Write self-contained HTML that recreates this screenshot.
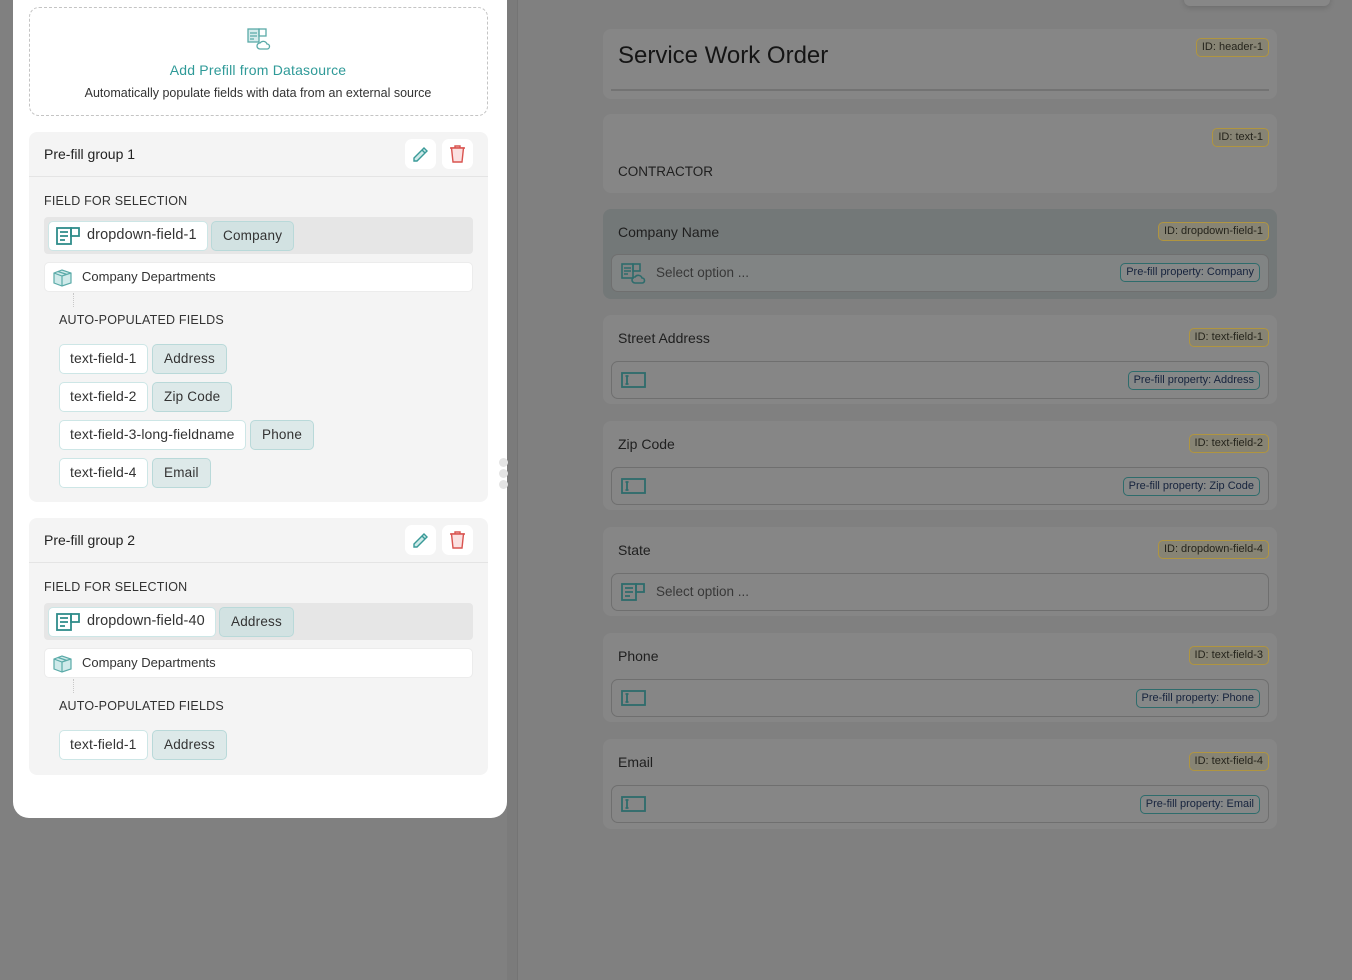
<!DOCTYPE html>
<html><head><meta charset="utf-8">
<style>
*{box-sizing:border-box;margin:0;padding:0}
body{width:1352px;height:980px;overflow:hidden;background:#808080;font-family:"Liberation Sans",sans-serif;position:relative;color:#222}
.a{position:absolute}
.strip{left:507px;top:0;width:11px;height:980px;background:#7b7b7b;border-right:1px solid #747474}
.topbox{left:1184px;top:-10px;width:146px;height:16px;background:#878787;border-radius:6px;box-shadow:0 2px 6px rgba(0,0,0,.15)}
.card{left:603px;width:674px;background:#868686;border-radius:8px}
.lbl{left:15px;font-size:14px;color:#1f1f1f}
.idb{right:8px;height:19px;border:1.5px solid #b09540;background:#878474;border-radius:5px;font-size:11px;color:#25241c;padding:0 5px;line-height:16px}
.inp{left:8px;width:658px;height:38px;border:1.5px solid #6f6f6f;border-radius:7px;background:#868686}
.pp{right:8px;top:9px;height:19px;border:1.5px solid #2e6c6c;background:#868888;border-radius:5px;font-size:11px;color:#16233d;padding:0 5px;line-height:16px}
.ph{left:44px;top:10px;font-size:13.5px;color:#383838}
.panel{left:13px;top:-20px;width:494px;height:838px;background:#fff;border-radius:16px}
.dash{left:29px;top:7px;width:459px;height:109px;border:1.5px dashed #c4c4c4;border-radius:10px;text-align:center}
.grp{left:29px;width:459px;background:#f4f4f4;border-radius:8px}
.gh{left:0;top:0;width:459px;height:45px;border-bottom:1px solid #e4e4e4}
.gt{left:15px;top:14px;font-size:14px;color:#222}
.btn{top:7px;width:31px;height:30px;background:#fff;border-radius:7px}
.sec{left:15px;font-size:12.5px;color:#333;letter-spacing:.2px}
.selrow{left:15px;width:429px;height:37px;background:#e6e6e6;border-radius:4px}
.chip{height:30px;border:1.5px solid #cde6e6;background:#fff;border-radius:5px;font-size:14px;color:#333;line-height:27px;padding:0 10px;letter-spacing:.1px}
.tag{height:30px;border:1.5px solid #b9d9d9;background:#dde9e9;border-radius:5px;font-size:13.5px;color:#333;line-height:27px;padding:0 11px;letter-spacing:.2px}
.dep{left:15px;width:429px;height:30px;background:#fff;border:1px solid #ececec;border-radius:5px;font-size:13px;color:#333;line-height:28px;padding-left:37px}
.vl{left:44px;width:0;border-left:1.5px dotted #c8c8c8}
</style></head><body>
<div class="a strip"></div>
<div class="a topbox"></div>

<div class="a card" style="top:29px;height:70px">
 <div class="a" style="left:15px;top:13px;font-size:24px;color:#151515">Service Work Order</div>
 <div class="a idb" style="top:9px">ID: header-1</div>
 <div class="a" style="left:8px;top:60px;width:658px;height:2px;background:#737373"></div>
</div>
<div class="a card" style="top:114px;height:79px">
 <div class="a idb" style="top:14px">ID: text-1</div>
 <div class="a lbl" style="top:50px;font-size:13.5px">CONTRACTOR</div>
</div>
<div class="a card" style="top:209px;height:90px;background:#737878">
 <div class="a lbl" style="top:15px">Company Name</div>
 <div class="a idb" style="top:13px">ID: dropdown-field-1</div>
 <div class="a inp" style="top:45px;background:#818484">
  <svg class="a" style="left:9px;top:8px" width="26" height="22" viewBox="0 0 26 22" fill="none" stroke="#2e6c6c" stroke-width="1.6"><rect x="1" y="1" width="11" height="14"/><rect x="12" y="1" width="7" height="7"/><path d="M3 5h7M3 8h7M3 11h4"/><path d="M14 20a3 3 0 0 1 0-6a4 4 0 0 1 7 1a2.5 2.5 0 0 1 0 5z"/></svg>
  <div class="a ph">Select option ...</div>
  <div class="a pp" style="top:8px">Pre-fill property: Company</div>
 </div>
</div>

<div class="a card" style="top:315px;height:89px">
 <div class="a lbl" style="top:15px">Street Address</div>
 <div class="a idb" style="top:13px">ID: text-field-1</div>
 <div class="a inp" style="top:46px"><svg class="a" style="left:9px;top:9px" width="26" height="18" viewBox="0 0 26 18" fill="none" stroke="#2e6c6c" stroke-width="1.8"><rect x="1" y="2" width="23" height="14"/><path d="M6 5v8M4.5 5h3M4.5 13h3"/></svg><div class="a pp">Pre-fill property: Address</div></div>
</div>
<div class="a card" style="top:421px;height:89px">
 <div class="a lbl" style="top:15px">Zip Code</div>
 <div class="a idb" style="top:13px">ID: text-field-2</div>
 <div class="a inp" style="top:46px"><svg class="a" style="left:9px;top:9px" width="26" height="18" viewBox="0 0 26 18" fill="none" stroke="#2e6c6c" stroke-width="1.8"><rect x="1" y="2" width="23" height="14"/><path d="M6 5v8M4.5 5h3M4.5 13h3"/></svg><div class="a pp">Pre-fill property: Zip Code</div></div>
</div>
<div class="a card" style="top:527px;height:89px">
 <div class="a lbl" style="top:15px">State</div>
 <div class="a idb" style="top:13px">ID: dropdown-field-4</div>
 <div class="a inp" style="top:46px"><svg class="a" style="left:9px;top:8px" width="26" height="20" viewBox="0 0 26 20" fill="none" stroke="#2e6c6c" stroke-width="1.8"><rect x="1" y="2" width="14" height="16"/><rect x="15" y="2" width="8" height="8"/><path d="M4 6h8M4 10h8M4 14h5"/></svg><div class="a ph">Select option ...</div></div>
</div>
<div class="a card" style="top:633px;height:89px">
 <div class="a lbl" style="top:15px">Phone</div>
 <div class="a idb" style="top:13px">ID: text-field-3</div>
 <div class="a inp" style="top:46px"><svg class="a" style="left:9px;top:9px" width="26" height="18" viewBox="0 0 26 18" fill="none" stroke="#2e6c6c" stroke-width="1.8"><rect x="1" y="2" width="23" height="14"/><path d="M6 5v8M4.5 5h3M4.5 13h3"/></svg><div class="a pp">Pre-fill property: Phone</div></div>
</div>
<div class="a card" style="top:739px;height:90px">
 <div class="a lbl" style="top:15px">Email</div>
 <div class="a idb" style="top:13px">ID: text-field-4</div>
 <div class="a inp" style="top:46px"><svg class="a" style="left:9px;top:9px" width="26" height="18" viewBox="0 0 26 18" fill="none" stroke="#2e6c6c" stroke-width="1.8"><rect x="1" y="2" width="23" height="14"/><path d="M6 5v8M4.5 5h3M4.5 13h3"/></svg><div class="a pp">Pre-fill property: Email</div></div>
</div>

<div class="a panel"></div>
<div class="a" style="left:499px;top:458px;width:9px;height:9px;border-radius:50%;background:#e4e4e4"></div>
<div class="a" style="left:499px;top:469px;width:9px;height:9px;border-radius:50%;background:#e4e4e4"></div>
<div class="a" style="left:499px;top:480px;width:9px;height:9px;border-radius:50%;background:#e4e4e4"></div>

<div class="a dash">
 <svg class="a" style="left:217px;top:19px" width="25" height="23" viewBox="0 0 25 23" fill="none" stroke="#5aaaa8" stroke-width="1.3"><rect x="1" y="2" width="11" height="13" fill="#d5ecec"/><rect x="12" y="2" width="7" height="7"/><path d="M3 6h7M3 9h7M3 12h4"/><path d="M13 22a3 3 0 0 1 0-6a4 4 0 0 1 7 1a2.5 2.5 0 0 1 0 5z" fill="#fff"/></svg>
 <div class="a" style="left:0;width:456px;top:54px;font-size:14px;color:#2f9a98;letter-spacing:.2px">Add Prefill from Datasource</div>
 <div class="a" style="left:0;width:456px;top:78px;font-size:12.5px;color:#333">Automatically populate fields with data from an external source</div>
</div>

<!-- group 1 -->
<div class="a grp" style="top:132px;height:370px">
 <div class="a gh"><div class="a gt">Pre-fill group 1</div>
  <div class="a btn" style="left:376px"><svg class="a" style="left:6px;top:6px" width="19" height="19" viewBox="0 0 19 19" fill="none" stroke="#3a9a98" stroke-width="1.4"><path d="M3 13L13 3l3 3L6 16H3z" fill="#cfeae9"/><path d="M11 5l3 3"/></svg></div>
  <div class="a btn" style="left:413px"><svg class="a" style="left:6px;top:5px" width="19" height="20" viewBox="0 0 19 20" fill="none" stroke="#d9534f" stroke-width="1.4"><path d="M2 4h15M7 4V2h5v2" /><path d="M3.5 4l1.5 14h9l1.5-14z" fill="#fbe1e1"/></svg></div>
 </div>
 <div class="a sec" style="top:62px">FIELD FOR SELECTION</div>
 <div class="a selrow" style="top:85px">
  <div class="a chip" style="left:4px;top:4px;padding-left:38px;font-size:14.5px">dropdown-field-1<svg class="a" style="left:7px;top:4px" width="26" height="20" viewBox="0 0 26 20" fill="none" stroke="#2f8c8a" stroke-width="1.8"><rect x="1" y="2" width="14" height="16"/><rect x="15" y="2" width="8" height="8"/><path d="M4 6h8M4 10h8M4 14h5"/></svg></div>
  <div class="a tag" style="left:167px;top:4px;background:#d2e2e2">Company</div>
 </div>
 <div class="a dep" style="top:130px">Company Departments<svg class="a" style="left:7px;top:5px" width="21" height="19" viewBox="0 0 21 19" fill="#cfeaea" stroke="#5aaaa8" stroke-width="1.2"><path d="M2 5l8-3 9 3v10l-9 3-8-3z"/><path d="M2 5l8 3 9-3M10 8v10M6 3.5l9 3"/></svg></div>
 <div class="a vl" style="top:161px;height:14px"></div>
 <div class="a sec" style="top:181px;left:30px">AUTO-POPULATED FIELDS</div>
 <div class="a chip" style="left:30px;top:212px">text-field-1</div><div class="a tag" style="left:123px;top:212px">Address</div>
 <div class="a chip" style="left:30px;top:250px">text-field-2</div><div class="a tag" style="left:123px;top:250px">Zip Code</div>
 <div class="a chip" style="left:30px;top:288px">text-field-3-long-fieldname</div><div class="a tag" style="left:221px;top:288px">Phone</div>
 <div class="a chip" style="left:30px;top:326px">text-field-4</div><div class="a tag" style="left:123px;top:326px">Email</div>
</div>

<!-- group 2 -->
<div class="a grp" style="top:518px;height:257px">
 <div class="a gh"><div class="a gt">Pre-fill group 2</div>
  <div class="a btn" style="left:376px"><svg class="a" style="left:6px;top:6px" width="19" height="19" viewBox="0 0 19 19" fill="none" stroke="#3a9a98" stroke-width="1.4"><path d="M3 13L13 3l3 3L6 16H3z" fill="#cfeae9"/><path d="M11 5l3 3"/></svg></div>
  <div class="a btn" style="left:413px"><svg class="a" style="left:6px;top:5px" width="19" height="20" viewBox="0 0 19 20" fill="none" stroke="#d9534f" stroke-width="1.4"><path d="M2 4h15M7 4V2h5v2" /><path d="M3.5 4l1.5 14h9l1.5-14z" fill="#fbe1e1"/></svg></div>
 </div>
 <div class="a sec" style="top:62px">FIELD FOR SELECTION</div>
 <div class="a selrow" style="top:85px">
  <div class="a chip" style="left:4px;top:4px;padding-left:38px;font-size:14.5px">dropdown-field-40<svg class="a" style="left:7px;top:4px" width="26" height="20" viewBox="0 0 26 20" fill="none" stroke="#2f8c8a" stroke-width="1.8"><rect x="1" y="2" width="14" height="16"/><rect x="15" y="2" width="8" height="8"/><path d="M4 6h8M4 10h8M4 14h5"/></svg></div>
  <div class="a tag" style="left:175px;top:4px;background:#d2e2e2">Address</div>
 </div>
 <div class="a dep" style="top:130px">Company Departments<svg class="a" style="left:7px;top:5px" width="21" height="19" viewBox="0 0 21 19" fill="#cfeaea" stroke="#5aaaa8" stroke-width="1.2"><path d="M2 5l8-3 9 3v10l-9 3-8-3z"/><path d="M2 5l8 3 9-3M10 8v10M6 3.5l9 3"/></svg></div>
 <div class="a vl" style="top:161px;height:14px"></div>
 <div class="a sec" style="top:181px;left:30px">AUTO-POPULATED FIELDS</div>
 <div class="a chip" style="left:30px;top:212px">text-field-1</div><div class="a tag" style="left:123px;top:212px">Address</div>
</div>
</body></html>
